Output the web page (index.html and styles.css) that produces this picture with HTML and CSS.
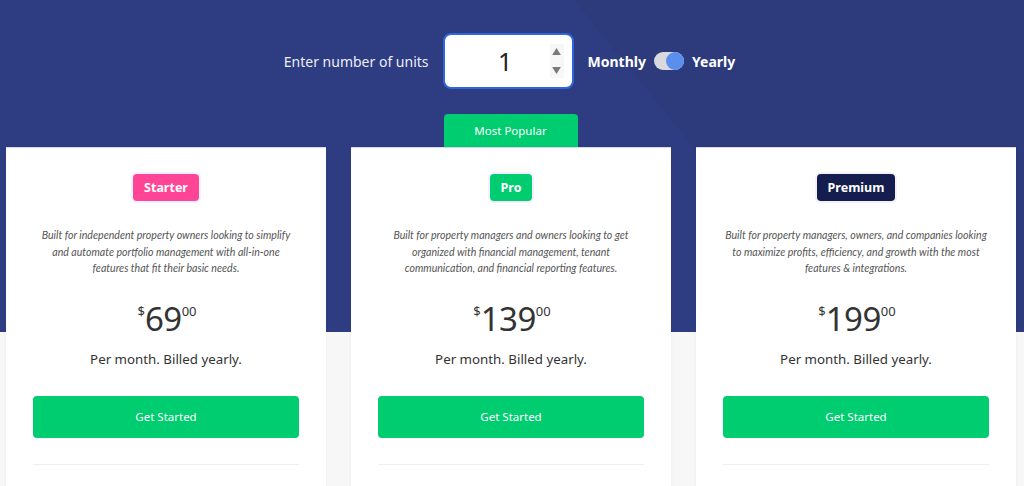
FILE: index.html
```html
<!DOCTYPE html>
<html lang="en">
<head>
<meta charset="utf-8">
<title>Pricing</title>
<link rel="stylesheet" href="styles.css">
</head>
<body>
<div class="page">
  <div class="controls">
    <span class="units-label">Enter number of units</span>
    <div class="units-input">
      <span class="units-value">1</span>
      <span class="spinner">
        <svg width="9" height="7" viewBox="0 0 10 8"><path d="M5 0 L10 8 L0 8 Z" fill="#7a7a7a"/></svg>
        <svg width="9" height="7" viewBox="0 0 10 8"><path d="M0 0 L10 0 L5 8 Z" fill="#7a7a7a"/></svg>
      </span>
    </div>
    <span class="period">Monthly</span>
    <span class="toggle"><span class="knob"></span></span>
    <span class="period">Yearly</span>
  </div>

  <div class="tab-row">
    <div class="tab-spacer"></div>
    <div class="tab-cell"><span class="popular">Most Popular</span></div>
    <div class="tab-spacer"></div>
  </div>

  <div class="cards">
    <div class="card">
      <span class="badge badge-starter">Starter</span>
      <p class="desc">Built for independent property owners looking to simplify<br>and automate portfolio management with all-in-one<br>features that fit their basic needs.</p>
      <div class="price"><span class="cur">$</span><span class="amount">69</span><span class="cents">00</span></div>
      <p class="billing">Per month. Billed yearly.</p>
      <a class="cta">Get Started</a>
      <hr class="divider">
    </div>
    <div class="card">
      <span class="badge badge-pro">Pro</span>
      <p class="desc">Built for property managers and owners looking to get<br>organized with financial management, tenant<br>communication, and financial reporting features.</p>
      <div class="price"><span class="cur">$</span><span class="amount">139</span><span class="cents">00</span></div>
      <p class="billing">Per month. Billed yearly.</p>
      <a class="cta">Get Started</a>
      <hr class="divider">
    </div>
    <div class="card">
      <span class="badge badge-premium">Premium</span>
      <p class="desc">Built for property managers, owners, and companies looking<br>to maximize profits, efficiency, and growth with the most<br>features &amp; integrations.</p>
      <div class="price"><span class="cur">$</span><span class="amount">199</span><span class="cents">00</span></div>
      <p class="billing">Per month. Billed yearly.</p>
      <a class="cta">Get Started</a>
      <hr class="divider">
    </div>
  </div>
</div>
</body>
</html>
```

FILE: styles.css
```css
* { box-sizing: border-box; }
html, body { margin: 0; padding: 0; }
body {
  font-family: "Noto Sans", "Open Sans", sans-serif;
  background:
    linear-gradient(to bottom, transparent 0 332px, #f7f7f8 332px),
    linear-gradient(51deg, #2e3c82 0%, #2e3c82 68.2%, #2d3a7b 68.3%, #2d3a7b 100%);
  height: 486px;
  overflow: hidden;
}
.page {
  padding: 33px 8px 0 6px;
}
.controls {
  display: flex;
  align-items: center;
  justify-content: center;
  height: 56px;
  padding-right: 3px;
}
.units-label {
  color: #eceef6;
  font-size: 14px;
  margin-right: 14px;
}
.units-input {
  width: 131px;
  height: 56px;
  background: #fff;
  border: 2px solid #2f66dc;
  border-radius: 8px;
  display: flex;
  align-items: center;
  margin-right: 14px;
}
.units-value {
  flex: 1;
  text-align: center;
  font-size: 25px;
  color: #222;
  padding-left: 16px;
}
.spinner {
  width: 14px;
  height: 34px;
  margin-right: 8px;
  background: #f7f7f7;
  display: flex;
  flex-direction: column;
  align-items: center;
  justify-content: space-between;
  padding: 4px 0;
}
.period {
  color: #ffffff;
  font-weight: 700;
  font-size: 14px;
}
.toggle {
  width: 30px;
  height: 18px;
  border-radius: 9px;
  background: #d9d9de;
  margin: 0 8px;
  display: flex;
  justify-content: flex-end;
}
.knob {
  width: 18px;
  height: 18px;
  border-radius: 50%;
  background: #5b8fee;
}
.tab-row {
  display: grid;
  grid-template-columns: 320px 320px 320px;
  column-gap: 25px;
  margin-top: 25px;
}
.tab-cell {
  display: flex;
  justify-content: center;
}
.popular {
  width: 134px;
  height: 33px;
  background: #00cc70;
  color: #fff;
  font-size: 11.5px;
  display: flex;
  align-items: center;
  justify-content: center;
  border-radius: 4px 4px 0 0;
  margin-left: -1px;
}
.cards {
  display: grid;
  grid-template-columns: 320px 320px 320px;
  column-gap: 25px;
}
.card {
  background: #fff;
  height: 340px;
  border-top: 1px solid #d6d9ec;
  box-shadow: 0 0 3px rgba(0, 0, 0, 0.05);
  display: flex;
  flex-direction: column;
  align-items: center;
  padding: 26px 20px 0;
}
.badge {
  height: 27px;
  padding: 0 11px;
  border-radius: 4px;
  color: #fff;
  font-weight: 700;
  font-size: 12.5px;
  display: flex;
  align-items: center;
  box-shadow: 0 0 0 2px #f3f0ff;
}
.badge-starter { background: #ff4595; }
.badge-pro { background: #00cc70; }
.badge-premium { background: #151c4e; }
.desc {
  margin: 26px 0 0;
  width: 280px;
  font-family: "Lato", "Open Sans", sans-serif;
  font-style: italic;
  font-size: 10.6px;
  line-height: 16.6px;
  color: #555;
  text-align: center;
  white-space: nowrap;
}
.price {
  margin-top: 22px;
  display: flex;
  align-items: flex-start;
  color: #333;
  height: 40px;
  padding-left: 2px;
}
.cur { font-size: 13px; margin-top: 3px; }
.amount { font-size: 33px; line-height: 40px; letter-spacing: -0.5px; }
.cents { font-size: 13px; margin-top: 3px; }
.billing {
  margin: 11px 0 0;
  font-size: 13.3px;
  color: #333;
}
.cta {
  margin-top: 28px;
  width: 266px;
  height: 42px;
  background: #00cc70;
  color: #fff;
  border-radius: 4px;
  font-size: 11.5px;
  display: flex;
  align-items: center;
  justify-content: center;
}
.divider {
  width: 266px;
  border: 0;
  border-top: 1px solid #eeeeee;
  margin: 26px 0 0;
}
```
